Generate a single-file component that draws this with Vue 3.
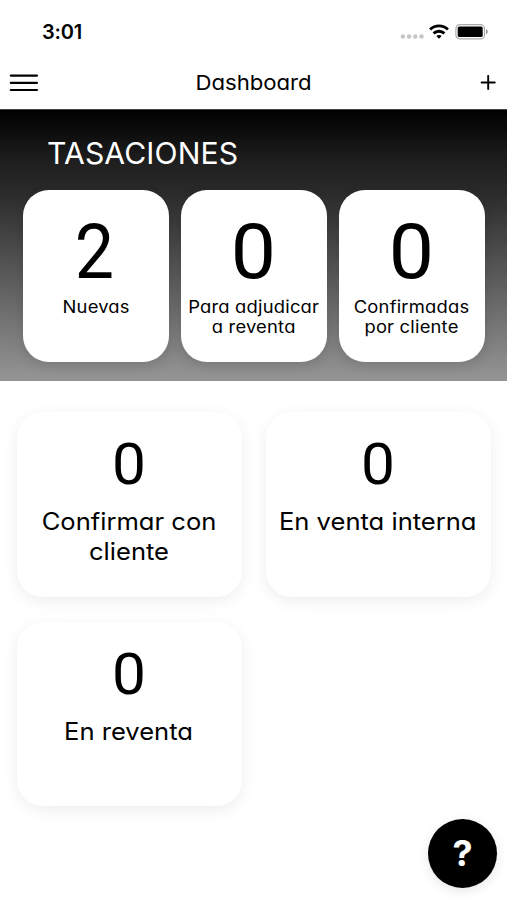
<script setup>
const appraisals = [
  { count: 2, lines: ['Nuevas'], id: 'nuevas' },
  { count: 0, lines: ['Para adjudicar', 'a reventa'], id: 'adjudicar' },
  { count: 0, lines: ['Confirmadas', 'por cliente'], id: 'confirmadas' },
]
const stages = [
  { count: 0, lines: ['Confirmar con', 'cliente'], id: 'confirmar' },
  { count: 0, lines: ['En venta interna'], id: 'interna' },
  { count: 0, lines: ['En reventa'], id: 'reventa' },
]
</script>

<template>
  <div class="screen">
    <div class="status">
      <span class="time">3:01</span>
      <div class="indicators">
        <svg class="dots" width="24" height="6" viewBox="0 0 24 6" fill="#c6c6c6">
          <circle cx="2.9" cy="2.5" r="2.2" /><circle cx="9.1" cy="2.5" r="2.2" />
          <circle cx="15.3" cy="2.5" r="2.2" /><circle cx="21.5" cy="2.5" r="2.2" />
        </svg>
        <svg class="wifi" width="20" height="15" viewBox="0 0 20 15" fill="none" stroke="#000" stroke-width="2.9">
          <path d="M1.1 5.5C6.1.6 13.9.6 18.9 5.5" />
          <path d="M4.6 9.4C7.6 6.5 12.4 6.5 15.4 9.4" />
          <path d="M10 14.8 7.3 12.1Q10 10 12.7 12.1Z" fill="#000" stroke="none" />
        </svg>
        <svg class="battery" width="33" height="16" viewBox="0 0 33 16">
          <rect x=".9" y=".7" width="28.6" height="14.2" rx="4" fill="none" stroke="#aaa" stroke-width="1.2" />
          <rect x="2.7" y="2.5" width="25" height="10.6" rx="1.6" fill="#000" />
          <path d="M31 5.2Q32.8 6 32.8 7.8T31 10.4Z" fill="#999" />
        </svg>
      </div>
    </div>
    <header class="bar">
      <svg class="menu" width="30" height="20" viewBox="0 0 30 20" stroke="#000" stroke-width="2.2" stroke-linecap="round">
        <path d="M1.8 2.6H28M1.8 9.8H28M1.8 17H28" />
      </svg>
      <h1>Dashboard</h1>
      <svg class="plus" width="16" height="16" viewBox="0 0 16 16" stroke="#000" stroke-width="1.9" stroke-linecap="round">
        <path d="M1.6 7.5H14.8M8.2 .9V14.1" />
      </svg>
    </header>
    <section class="hero">
      <h2>TASACIONES</h2>
      <div class="row">
        <article v-for="item in appraisals" :key="item.id" class="card small">
          <strong :class="{ zero: item.count === 0 }">{{ item.count }}</strong>
          <p><span v-for="line in item.lines" :key="line">{{ line }}</span></p>
        </article>
      </div>
    </section>
    <main class="grid">
      <article v-for="item in stages" :key="item.id" class="card large">
        <strong :class="{ zero: item.count === 0 }">{{ item.count }}</strong>
        <p><span v-for="line in item.lines" :key="line">{{ line }}</span></p>
      </article>
    </main>
    <button class="help" aria-label="Ayuda">?</button>
  </div>
</template>

<style>
body { margin: 0; background: #fff; }
</style>

<style scoped>
.screen {
  position: relative;
  width: 507px;
  height: 900px;
  overflow: hidden;
  background: #fff;
  color: #000;
  font-family: Inter, sans-serif;
  font-feature-settings: 'cv11' 1;
}
.status {
  display: flex;
  justify-content: space-between;
  align-items: center;
  box-sizing: border-box;
  height: 63px;
  padding: 0 19px 0 42px;
}
.time { font-size: 20px; font-weight: 600; line-height: 24px; letter-spacing: -.2px; }
.indicators { display: flex; align-items: center; }
.dots { margin: 10px 5px 0 0; }
.wifi { margin-right: 6px; }
.bar {
  display: grid;
  grid-template-columns: 60px 1fr 60px;
  align-items: center;
  box-sizing: border-box;
  height: 46px;
  padding: 0 10px 6px 9px;
}
.bar h1 { margin: 0; padding-left: 1px; text-align: center; font-size: 20.5px; font-weight: 400; line-height: 26px; transform: scaleX(1.08); }
.plus { justify-self: end; margin-right: 1px; }
.hero {
  box-sizing: border-box;
  height: 271.5px;
  padding: 25px 22.5px 0 23px;
  border-top: 1px solid #444;
  background: linear-gradient(#000, #202020 20%, #2a2a2a 30%, #959595);
}
.hero h2 { margin: 0 0 18.5px 24px; color: #fff; font-size: 30px; font-weight: 400; line-height: 36px; letter-spacing: .1px; transform: scaleX(1.005); transform-origin: left; }
.row { display: grid; grid-template-columns: repeat(3, 145.5px); justify-content: space-between; }
.card {
  display: flex;
  flex-direction: column;
  align-items: center;
  box-sizing: border-box;
  background: #fff;
  border-radius: 26px;
  text-align: center;
}
.card strong { margin-right: 2px; font-family: Roboto, sans-serif; font-weight: 400; transform: scaleX(.92); }
.card .zero { margin-right: 0; transform: scaleX(1.06); }
.card p { margin: 0; white-space: nowrap; transform: scaleX(1.08); }
.card span { display: block; }
.small { height: 172.5px; padding-top: 24px; box-shadow: 0 4px 12px rgba(0, 0, 0, .12); }
.small strong { font-size: 76px; line-height: 76px; }
.small p { margin-top: 7.5px; font-size: 17px; font-weight: 400; line-height: 20px; letter-spacing: .2px; }
.grid {
  display: grid;
  grid-template-columns: 225px 225px;
  column-gap: 24px;
  row-gap: 25px;
  padding: 31.5px 17px 0;
}
.large { height: 184.5px; padding-top: 24px; box-shadow: 0 4px 16px rgba(0, 0, 0, .07); }
.large strong { font-size: 57px; line-height: 57px; }
.large p { margin: 14px 2px 0 0; font-size: 24px; line-height: 30px; transform: scaleX(1.065); }
.help {
  position: absolute;
  right: 10px;
  bottom: 12px;
  width: 69px;
  height: 69px;
  padding: 0;
  border: 0;
  border-radius: 50%;
  background: #000;
  color: #fff;
  font: 700 36px/69px Inter, sans-serif;
  box-shadow: 0 3px 12px rgba(0, 0, 0, .1);
}
</style>
